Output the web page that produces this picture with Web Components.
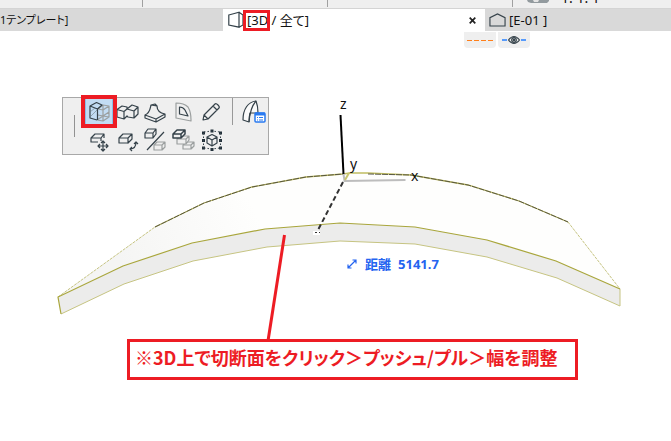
<!DOCTYPE html>
<html lang="ja">
<head>
<meta charset="utf-8">
<title>3D</title>
<style>
html, body { margin: 0; height: 100%; }
body { background: #fff; color: #111; font: 13px/16px "Noto Sans", "Noto Sans CJK JP", sans-serif; font-feature-settings: "palt"; overflow: hidden; }
</style>
</head>
<body>
<model-app></model-app>
<script>
const define = (name, html, setup) => {
  const template = document.createElement('template');
  template.innerHTML = html;
  customElements.define(name, class extends HTMLElement {
    constructor() {
      super();
      this.attachShadow({ mode: 'open' }).append(template.content.cloneNode(true));
      if (setup) setup(this, this.shadowRoot);
    }
  });
};

define('info-bar', `
<style>
:host { display: grid; grid-template-columns: 143px 185px 185px 1fr; height: 8px; background: #efefef; border-bottom: 1px solid #d4d4d4; overflow: hidden; }
span { border-right: 1px solid #a0a0a0; height: 7px; }
div { display: flex; gap: 11px; padding-left: 14px; align-items: flex-end; height: 6px; overflow: hidden; }
b { font: 14px/16px "Noto Sans", sans-serif; height: 16px; }
svg { flex: none; display: block; }
</style>
<span></span><span></span><span></span>
<div><svg width="23" height="16" viewBox="0 0 23 16"><path d="M0 10h22v1l-2 2H4L1 12z" fill="#929a9e"/><path d="M6 10h6l-1 2H7z" fill="#e4e4e4"/></svg><b>1: 1: 1</b></div>`);

define('view-tab', `
<style>
:host { display: flex; align-items: center; min-width: 0; height: 22px; background: #d9d9d9; white-space: nowrap; }
:host([current]) { background: #fff; }
button { all: unset; display: flex; align-items: center; flex: 1; gap: 3px; height: 22px; font: 13px/20px "Noto Sans", "Noto Sans CJK JP", sans-serif; font-feature-settings: "palt"; cursor: pointer; }
:host([compact]) button { font-size: 11px; }
</style>
<button type="button" role="tab"><slot name="icon"></slot><span><slot></slot></span></button><slot name="close"></slot>`);

define('tab-bar', `
<style>
:host { display: grid; grid-template-columns: 223fr 262fr 186fr; }
svg { display: block; fill: none; stroke: #35424a; stroke-width: 1.2; }
view-tab:nth-of-type(2) { padding-left: 5px; }
view-tab:nth-of-type(3) { padding-left: 4px; }
.close { all: unset; width: 12px; height: 20px; margin-right: 7px; display: grid; place-items: center; cursor: pointer; }
.close svg { stroke: #222; stroke-width: 1.7; }
.mark { position: relative; }
.mark::after { content: ""; position: absolute; inset: -1px -2px -2px -4px; border: 3px solid #ed1c24; }
</style>
<view-tab compact>1テンプレート]</view-tab>
<view-tab current><svg slot="icon" width="16" height="18" viewBox="0 0 16 18"><path d="M.8 4 11 1.2v15L.8 14zM11 1.2 15 4v10l-4 2.2"/></svg><span class="mark">[3D</span> / 全て]<button class="close" slot="close" type="button" aria-label="閉じる"><svg width="7" height="7" viewBox="0 0 7 7"><path d="m.7.7 5.6 5.6M6.3.7.7 6.3"/></svg></button></view-tab>
<view-tab><svg slot="icon" width="17" height="16" viewBox="0 0 18 16"><path d="M1 14.4V5.5L9 1.6l8 3.9v8.9z"/></svg>[E-01 ]</view-tab>`);

define('view-toggles', `
<style>
:host { display: flex; gap: 2px; }
button { all: unset; width: 32px; height: 16px; border-radius: 0 0 4px 4px; background: #efefef; display: grid; place-items: center; cursor: pointer; }
svg { display: block; fill: none; }
</style>
<button type="button" aria-label="切断線"><svg width="26" height="9"><path d="M0 4.500h26" stroke="#ff7f1a" stroke-dasharray="5 2"/></svg></button>
<button type="button" aria-label="表示"><svg width="26" height="10" viewBox="0 0 26 10"><path d="M1 5h5m14 0h5" stroke="#2680ff" stroke-width="1.3"/><g stroke="#35424a" stroke-width="1.2"><path d="M7.500 5q5.500-7 11 0q-5.500 7-11 0z"/><circle cx="13" cy="5" r="2.300"/><circle cx="13" cy="5" r=".8"/></g></svg></button>`);

define('tool-button', `
<style>
:host { display: block; }
button { all: unset; box-sizing: border-box; display: grid; place-items: center; width: 28px; height: 28px; cursor: pointer; }
:host([active]) button { background: #c2dcf3; border: 1px solid #8cbfe8; }
</style>
<button type="button"><slot></slot></button>`, (host, root) => {
  queueMicrotask(() => root.querySelector('button').setAttribute('aria-label', host.getAttribute('label') || ''));
});

define('edit-palette', `
<style>
:host { display: grid; grid-template-columns: 22px 140px 43px; border: 1px solid #a8a8a8; background: #efefef; }
.grip { width: 1px; height: 22px; background: #929292; justify-self: center; align-self: center; }
.tools { display: grid; grid-template-columns: repeat(5, 28px); grid-auto-rows: 28px; }
.side { border-left: 1px solid #999; height: 27px; margin-left: 7px; padding-left: 7px; }
svg { width: 24px; height: 24px; display: block; fill: none; stroke: #35424a; stroke-width: 1.2; stroke-linejoin: round; }
.l { stroke: #9b9f9f; } .f { fill: #efefef; }
tool-button[active] { position: relative; }
tool-button[active]::after { content: ""; position: absolute; inset: -3px -4px -2px; border: 4px solid #ed1c24; }
</style>
<div class="grip"></div>
<div class="tools">
<tool-button active label="プッシュ/プル"><svg viewBox="0 0 24 24"><path class="l" stroke="#8d999f" d="M11 9 16 5l6 1v11l-6 4-6-1M11 9l5 1 6-4M16 10v11M16 5v11l6 1M10 20l6-4M11 15l5 1 6-4"/><path d="M3 6 9.500 2.500 15 5l-4.500 4L3 6v12l7 2M10.500 9v11"/><path stroke-width=".6" stroke="#6d7c84" d="m3 12 5-4M3 17l7-7"/></svg></tool-button>
<tool-button label="オフセット"><svg viewBox="0 0 24 24"><path d="M2 9.500 7 6l5 1v2l5-4 6 2v7l-4 4-6-1-1-1-3 3-7-2zM2 9.500l7 2V19M9 11.500 12 9l7 2v7m0-7 4-4"/></svg></tool-button>
<tool-button label="高さ編集"><svg viewBox="0 0 24 24"><path d="M2 15c5-2 5-6 6-10l4-1 2 2c0 5 3 7 8 8v3l-9 5-11-4zM2 15l11 4 9-5M13 19v3M8 5l6 1"/></svg></tool-button>
<tool-button label="輪郭"><svg viewBox="0 0 24 24"><path class="l" d="M5 3Q13 3 17 7 20 12 20 20v1L5 18z"/><path d="M8.500 7Q12 7 14 10l3 6-8.500-2z"/></svg></tool-button>
<tool-button label="編集"><svg viewBox="0 0 24 24"><path d="M4 20 5 15 16 4q1-1 3 1t1 3L9 19zM5 15l4 4M14 6l4 4"/></svg></tool-button>
<tool-button label="移動"><svg viewBox="0 0 24 24"><path d="M11 14H4v-4l4-4h9l-3 4H4m10 0v3m3-7v4"/><path d="M16 13v10m-5-5h10M14 15l2-2 2 2m-4 6 2 2 2-2M13 16l-2 2 2 2m6-4 2 2-2 2"/></svg></tool-button>
<tool-button label="回転"><svg viewBox="0 0 24 24"><path d="M13 15H4v-5l4-4h9v5l-4 4v-5l4-4M4 10h9"/><path d="M15 21q6 0 6-7m-2 2 2-2 2 2m-6 3-2 2 2 2"/></svg></tool-button>
<tool-button label="鏡像"><svg viewBox="0 0 24 24"><path class="l" d="m11 17 3-3h8v5l-3 3h-8zM11 17h8v5m0-5 3-3"/><path d="M2 5 5 1h8v5l-3 4H2zM2 5h8v5m0-5 3-4M4 22 21 4"/></svg></tool-button>
<tool-button label="配列"><svg viewBox="0 0 24 24"><g class="l"><path class="f" d="m12 17 3-3h8v4l-3 3h-8zM12 17h8v4m0-4 3-3"/><path class="f" d="m6 11 3-3h9v4l-3 4H6zM6 11h9v5m0-5 3-3"/></g><path class="f" stroke-width="1.5" d="m2 6 4-4h8v4l-4 4H2zM2 6h8v4m0-4 4-4"/></svg></tool-button>
<tool-button label="サイズ変更"><svg viewBox="0 0 24 24"><path d="m8 9 5-2.500L18 9v6l-5 3-5-3zM8 9l5 3 5-3m-5 3v6"/><path stroke-width="3" stroke="#22303a" d="M3 5h3m5.500-2h3M20 5h3M3 12.500h3m14 0h3M3 20h3m5.500 1.500h3M20 20h3"/><path stroke-width="1" stroke-dasharray="1.500 2" d="M4.500 5v15M21.500 5v15M5 4l8-1 8 1M5 20l8 1 8-1"/></svg></tool-button>
</div>
<div class="side"><tool-button label="設定"><svg viewBox="0 0 24 24"><path fill="#fafafa" d="M1 20C1 9 6 2 14 1q2 5 2 12l-8 0Q7 17 7 22z"/><path d="M14 1Q8 8 7 22"/><rect x="13" y="13" width="10" height="9" rx="1" fill="#fff" stroke="#2879f0" stroke-width="1.500"/><path d="M13 14h10" stroke="#2879f0" stroke-width="3"/><path d="M15 17.500h1m1 0h4m-6 2.500h1m1 0h4" stroke="#2879f0"/></svg></tool-button></div>`);

define('model-view', `
<style>
:host { display: block; }
svg { display: block; }
.edge { stroke: #a9a63c; }
.soft { stroke: #c6c482; }
text { font: 14px "Noto Sans", sans-serif; fill: #111; }
</style>
<svg width="671" height="410" viewBox="0 31 671 410" fill="none" role="img" aria-label="曲面シェルの3Dモデル">
<defs><linearGradient id="shell" gradientUnits="userSpaceOnUse" x1="120" y1="260" x2="250" y2="200"><stop stop-color="#f5f5f4"/><stop offset="1" stop-color="#fefefd"/></linearGradient></defs>
<path fill="url(#shell)" d="M58 297 155 227 204 203 252 187 306 177 350 173 368 173 411 175 468 185 519 201 568 222 620 289 556 261 487 240 415 227 340 223 265 229 192 243 123 266z"/>
<path fill="#ececeb" d="M58 297 123 266 192 243 265 229 340 223 415 227 487 240 556 261 620 289V306L557 278 487 257 415 244 340 241 267 247 193 261 124 284 61 314z"/>
<path class="soft" stroke-dasharray="3 1" d="M58 297 155 227M568 222 620 289"/>
<path class="soft" d="M620 289V306L557 278 487 257 415 244 340 241 267 247 193 261 124 284 61 314"/>
<path class="edge" stroke-width="1.200" d="M61 314 58 297 123 266 192 243 265 229 340 223 415 227 487 240 556 261 620 289"/>
<path stroke="#c0bd62" stroke-width="1.300" d="M155 227 204 203 252 187 306 177 343 174 350 173 368 173 411 175 468 185 519 201 568 222"/>
<path stroke="#3c3c34" stroke-opacity=".8" stroke-dasharray="6 1" d="M155 227 204 203 252 187 306 177 343 174M368 174 411 175 468 185 519 201 568 222"/>
<path stroke="#000" stroke-width="2" d="m340.500 115 3 59"/>
<path stroke="#bdbdbd" stroke-width="2" d="m343.500 174 1 7 61-1"/>
<path stroke="#c9c66f" stroke-width="2" d="m345 180 4-7"/>
<path stroke="#333" stroke-width="2" stroke-dasharray="5 3" d="m343 182-25 48"/>
<path fill="#fff" d="M313 231h7v4h-7z"/><path stroke="#333" stroke-dasharray="2 2" d="M315 232.500h5"/>
<text x="340" y="109">z</text><text x="350" y="169">y</text><text x="411" y="181">x</text>
<path stroke="#ed1c24" stroke-width="3" d="M284.500 235 268 341"/>
</svg>`);

define('distance-readout', `
<style>
:host { display: flex; align-items: center; gap: 8px; color: #2464f0; font: bold 13px/20px "Noto Sans", "Noto Sans CJK JP", sans-serif; white-space: nowrap; }
output { display: flex; gap: 7px; }
svg { fill: none; stroke: currentColor; stroke-width: 1.2; }
</style>
<svg width="10" height="10" viewBox="0 0 10 10"><path d="m1 9 8-8M5.500 1H9v3.500M1 5.500V9h3.500"/></svg><output><span>距離</span> <span>5141.7</span></output>`);

define('callout-note', `
<style>
:host { display: block; box-sizing: border-box; padding: 3px 5px 8px; border: 3px solid #ed1c24; color: #ed1c24; background: #fff; font: bold 18px/24px "Noto Sans CJK JP", sans-serif; font-feature-settings: "palt"; white-space: nowrap; }
::slotted(span) { font-feature-settings: normal; }
</style><slot></slot>`);

define('model-app', `
<style>
:host { display: flex; flex-direction: column; min-height: 100vh; }
main { position: relative; flex: 1; }
view-toggles { position: absolute; top: 1px; left: 464px; }
edit-palette { position: absolute; top: 66px; left: 62px; }
distance-readout { position: absolute; top: 223px; left: 347px; }
callout-note { position: absolute; top: 308px; left: 127px; width: 451px; }
</style>
<info-bar></info-bar>
<tab-bar role="tablist"></tab-bar>
<main>
<model-view></model-view>
<view-toggles></view-toggles>
<edit-palette></edit-palette>
<distance-readout></distance-readout>
<callout-note>※3D上で切断面をクリック<span>＞</span>プッシュ/プル<span>＞</span>幅を調整</callout-note>
</main>`);
</script>
</body>
</html>
